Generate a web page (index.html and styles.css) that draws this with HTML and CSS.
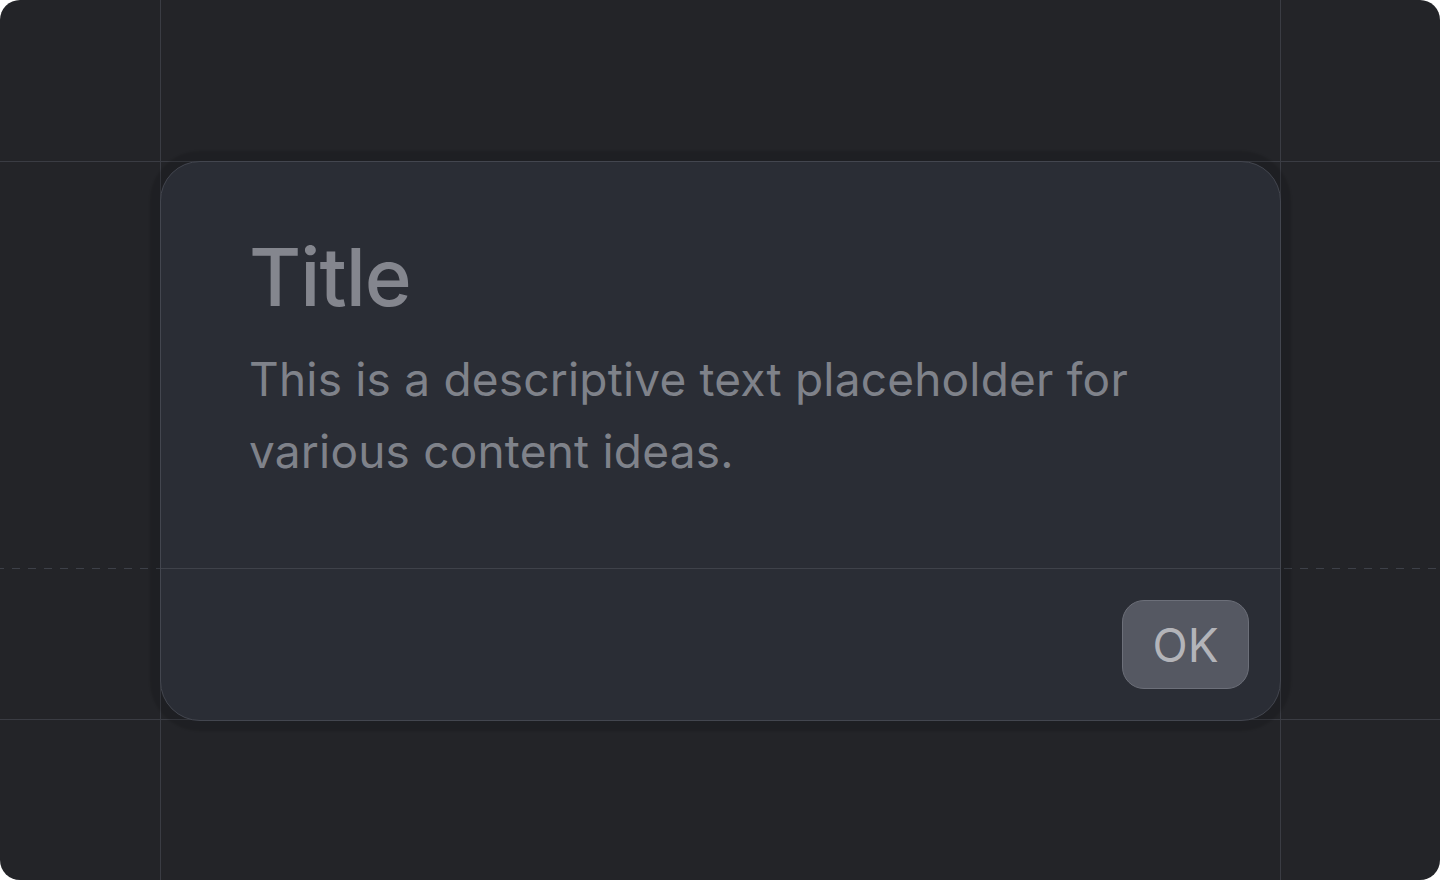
FILE: index.html
```html
<!DOCTYPE html>
<html lang="en">
<head>
<meta charset="utf-8">
<title>Dialog</title>
<link rel="stylesheet" href="styles.css">
</head>
<body>
<div class="frame">
  <div class="dialog">
    <div class="dialog-content">
      <h1 class="dialog-title">Title</h1>
      <p class="dialog-text">This is a descriptive text placeholder for various content ideas.</p>
    </div>
    <div class="dialog-footer">
      <button class="btn-ok" type="button">OK</button>
    </div>
  </div>
</div>
</body>
</html>
```
FILE: styles.css
```css
html, body {
  margin: 0;
  padding: 0;
  background: #ffffff;
}

.frame {
  width: 1440px;
  height: 880px;
  border-radius: 20px;
  overflow: hidden;
  background-color: #232428;
  background-image:
    linear-gradient(to right, transparent 160px, #3a3c43 160px, #3a3c43 161px, transparent 161px, transparent 1280px, #3a3c43 1280px, #3a3c43 1281px, transparent 1281px),
    linear-gradient(to bottom, transparent 161px, #3a3c43 161px, #3a3c43 162px, transparent 162px, transparent 719px, #3a3c43 719px, #3a3c43 720px, transparent 720px),
    repeating-linear-gradient(to right, #3d4048 0 4px, transparent 4px 12px, #3d4048 12px 16px),
    repeating-linear-gradient(to right, transparent 0 4px, #3d4048 4px 12px, transparent 12px 16px);
  background-size: 100% 100%, 100% 100%, 160px 1px, 160px 1px;
  background-position: 0 0, 0 0, 0 568px, 1280px 568px;
  background-repeat: no-repeat;
  display: grid;
  grid-template-columns: 160px 1121px 1fr;
  grid-template-rows: 161px 560px 1fr;
  font-family: Inter, "Noto Sans", sans-serif;
}

.dialog {
  grid-column: 2;
  grid-row: 2;
  box-sizing: border-box;
  background: #2a2d35;
  border: 1px solid #43464f;
  border-radius: 40px;
  box-shadow: 0 0 2px 10px rgba(0, 0, 0, 0.12);
  display: flex;
  flex-direction: column;
}

.dialog-content {
  padding: 67px 88px 0 88px;
  height: 407px;
  box-sizing: border-box;
  border-bottom: 1px solid #3f424a;
}

.dialog-title {
  margin: 0;
  font-size: 80px;
  line-height: 96px;
  font-weight: 500;
  color: #84868e;
  letter-spacing: -1px;
}

.dialog-text {
  margin: 18px 0 0 0;
  font-size: 46px;
  line-height: 72px;
  font-weight: 400;
  letter-spacing: 0.2px;
  color: #7f828a;
  max-width: 920px;
}

.dialog-footer {
  flex: 1;
  display: flex;
  justify-content: flex-end;
  align-items: flex-start;
  padding: 31px 31px 0 0;
}

.btn-ok {
  width: 127px;
  height: 89px;
  box-sizing: border-box;
  border: 1px solid #6c6f79;
  border-radius: 22px;
  background: #555862;
  color: #b3b4b9;
  font-family: Inter, "Noto Sans", sans-serif;
  font-size: 46px;
  font-weight: 400;
  padding: 0;
  display: flex;
  align-items: center;
  justify-content: center;
}
```
